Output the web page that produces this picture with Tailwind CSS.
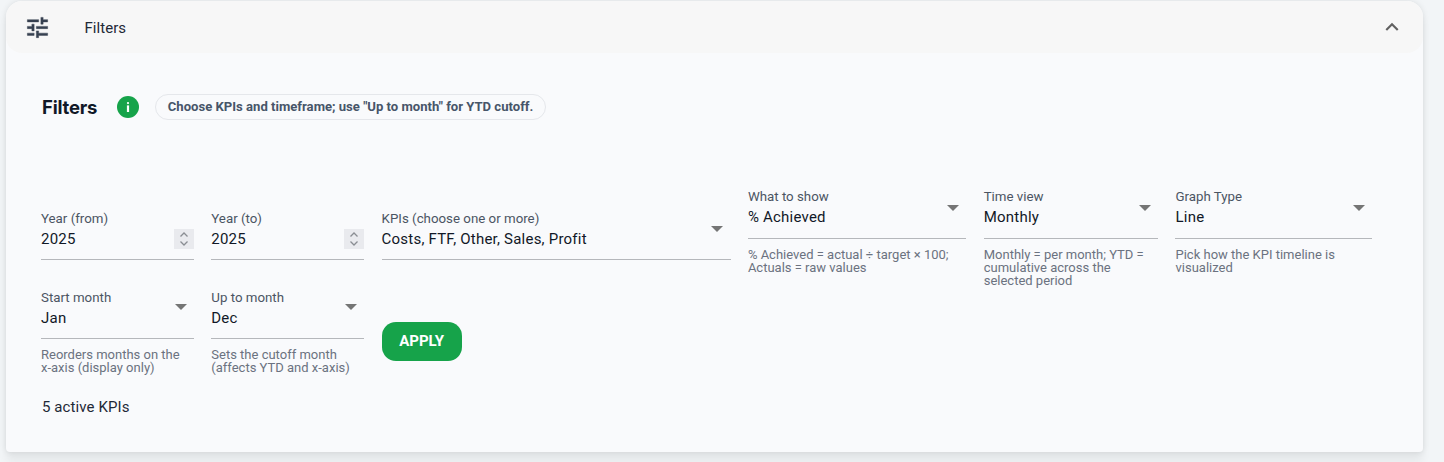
<!DOCTYPE html>
<html lang="en">
    <head>
        <meta charset="UTF-8" />
        <title>Filters</title>
        <script src="https://cdn.jsdelivr.net/npm/@tailwindcss/browser@4"></script>
    </head>
    <body class="h-[462px] overflow-hidden bg-[#f2f5f7] font-['Roboto',sans-serif]">
        <div class="ml-[6px] mt-px w-[1417px] h-[451px] rounded-t-[16px] rounded-b-[4px] bg-[#f9fafc] shadow-[0_0_6px_rgba(0,0,0,0.1),0_10px_8px_rgba(0,0,0,0.05)]">
            <!-- Header -->
            <div class="flex items-center h-[52px] pl-[17.5px] pr-[18px] rounded-[16px] bg-[#f7f7f7]">
                <svg class="w-[27px] h-[27px] text-[#374151]" viewBox="0 0 24 24" fill="currentColor" stroke="currentColor" stroke-width="0.4"><path d="M3 17v2h6v-2H3zM3 5v2h10V5H3zm10 16v-2h8v-2h-8v-2h-2v6h2zM7 9v2H3v2h4v2h2V9H7zm14 4v-2H11v2h10zm-6-4h2V7h4V5h-4V3h-2v6z"/></svg>
                <span class="ml-[34px] pt-[2px] text-[15px] tracking-[0.05px] text-[#1f2937]">Filters</span>
                <svg class="ml-auto w-[26px] h-[26px] text-[#616161]" viewBox="0 0 24 24" fill="currentColor"><path d="M7.41 15.41 12 10.83l4.59 4.58L18 14l-6-6-6 6z"/></svg>
            </div>

            <div class="pl-[35px]">
                <!-- Title -->
                <div class="flex items-center h-[26px] mt-[41px]">
                    <h2 class="ml-px pt-[2px] font-['Inter',sans-serif] text-[18.5px] font-bold text-[#111827] tracking-[-0.2px]">Filters</h2>
                    <span class="ml-[20px] flex items-center justify-center w-[22px] h-[22px] rounded-full bg-[#16a34a]">
                        <svg class="w-[14px] h-[14px] text-white" viewBox="0 0 14 14" fill="currentColor"><rect x="5.9" y="2" width="2.2" height="2.2" rx="1.1"/><rect x="5.9" y="5.4" width="2.2" height="6.6"/></svg>
                    </span>
                    <span class="ml-[16px] flex items-center h-[26px] px-[11.5px] rounded-full border border-[#e5e7eb] text-[13.1px] font-bold text-[#475569]">Choose KPIs and timeframe; use "Up to month" for YTD cutoff.</span>
                </div>

                <!-- First row -->
                <div class="flex items-start gap-[17.3px] mt-[68px]">
                    <div class="mt-[22px] w-[153px] h-[50px] border-b border-[#b5b7bb] relative">
                        <div class="text-[13.3px] leading-[18px] text-[#4b5563]">Year (from)</div>
                        <div class="text-[15px] leading-[23px] tracking-[0.22px] text-[#111827]">2025</div>
                        <span class="absolute right-0 top-[19px] flex items-center justify-center w-[20px] h-[20px] bg-[#e9eaee]">
                            <svg class="w-[12px] h-[16px] text-[#8a8d93]" viewBox="0 0 12 16" fill="none" stroke="currentColor" stroke-width="1.3"><path d="M2.5 5.5 6 2l3.5 3.5M2.5 10.5 6 14l3.5-3.5"/></svg>
                        </span>
                    </div>
                    <div class="mt-[22px] w-[153px] h-[50px] border-b border-[#b5b7bb] relative">
                        <div class="text-[13.3px] leading-[18px] text-[#4b5563]">Year (to)</div>
                        <div class="text-[15px] leading-[23px] tracking-[0.22px] text-[#111827]">2025</div>
                        <span class="absolute right-0 top-[19px] flex items-center justify-center w-[20px] h-[20px] bg-[#e9eaee]">
                            <svg class="w-[12px] h-[16px] text-[#8a8d93]" viewBox="0 0 12 16" fill="none" stroke="currentColor" stroke-width="1.3"><path d="M2.5 5.5 6 2l3.5 3.5M2.5 10.5 6 14l3.5-3.5"/></svg>
                        </span>
                    </div>
                    <div class="mt-[22px] w-[349px] h-[50px] border-b border-[#b5b7bb] relative">
                        <div class="text-[13.3px] leading-[18px] text-[#4b5563]">KPIs (choose one or more)</div>
                        <div class="text-[15px] leading-[23px] tracking-[0.22px] text-[#111827]">Costs, FTF, Other, Sales, Profit</div>
                        <span class="absolute right-[8px] top-[16px] w-0 h-0 border-x-[6px] border-x-transparent border-t-[6px] border-t-[#757575]"></span>
                    </div>
                    <div class="w-[218.5px]">
                        <div class="h-[51px] border-b border-[#b5b7bb] relative">
                            <div class="text-[13.3px] leading-[18px] text-[#4b5563]">What to show</div>
                            <div class="text-[15px] leading-[23px] tracking-[0.22px] text-[#111827]">% Achieved</div>
                            <span class="absolute right-[7px] top-[17px] w-0 h-0 border-x-[6px] border-x-transparent border-t-[6px] border-t-[#757575]"></span>
                        </div>
                        <p class="mt-[9px] h-[40px] text-[13px] leading-[13px] text-[#6b7280]">% Achieved = actual ÷ target × 100; Actuals = raw values</p>
                    </div>
                    <div class="w-[174.5px]">
                        <div class="h-[51px] border-b border-[#b5b7bb] relative">
                            <div class="text-[13.3px] leading-[18px] text-[#4b5563]">Time view</div>
                            <div class="text-[15px] leading-[23px] tracking-[0.22px] text-[#111827]">Monthly</div>
                            <span class="absolute right-[7px] top-[17px] w-0 h-0 border-x-[6px] border-x-transparent border-t-[6px] border-t-[#757575]"></span>
                        </div>
                        <p class="mt-[9px] h-[40px] text-[13px] leading-[13px] text-[#6b7280]">Monthly = per month; YTD = cumulative across the selected period</p>
                    </div>
                    <div class="w-[196.5px]">
                        <div class="h-[51px] border-b border-[#b5b7bb] relative">
                            <div class="text-[13.3px] leading-[18px] text-[#4b5563]">Graph Type</div>
                            <div class="text-[15px] leading-[23px] tracking-[0.22px] text-[#111827]">Line</div>
                            <span class="absolute right-[7px] top-[17px] w-0 h-0 border-x-[6px] border-x-transparent border-t-[6px] border-t-[#757575]"></span>
                        </div>
                        <p class="mt-[9px] h-[40px] text-[13px] leading-[13px] text-[#6b7280]">Pick how the KPI timeline is visualized</p>
                    </div>
                </div>

                <!-- Second row -->
                <div class="flex items-start gap-[17.3px] mt-[1px]">
                    <div class="w-[153px]">
                        <div class="h-[50px] border-b border-[#b5b7bb] relative">
                            <div class="text-[13.3px] leading-[18px] text-[#4b5563]">Start month</div>
                            <div class="text-[15px] leading-[23px] tracking-[0.22px] text-[#111827]">Jan</div>
                            <span class="absolute right-[7px] top-[15px] w-0 h-0 border-x-[6px] border-x-transparent border-t-[6px] border-t-[#757575]"></span>
                        </div>
                        <p class="mt-[9px] text-[13px] leading-[13px] text-[#6b7280]">Reorders months on the<br />x-axis (display only)</p>
                    </div>
                    <div class="w-[153px]">
                        <div class="h-[50px] border-b border-[#b5b7bb] relative">
                            <div class="text-[13.3px] leading-[18px] text-[#4b5563]">Up to month</div>
                            <div class="text-[15px] leading-[23px] tracking-[0.22px] text-[#111827]">Dec</div>
                            <span class="absolute right-[7px] top-[15px] w-0 h-0 border-x-[6px] border-x-transparent border-t-[6px] border-t-[#757575]"></span>
                        </div>
                        <p class="mt-[9px] text-[13px] leading-[13px] text-[#6b7280]">Sets the cutoff month (affects YTD and x-axis)</p>
                    </div>
                    <button class="mt-[33px] w-[80px] h-[39px] rounded-[14px] bg-[#16a34a] text-[15px] font-bold text-white">APPLY</button>
                </div>

                <p class="ml-px mt-[23px] text-[15px] leading-[20px] tracking-[0.1px] text-[#1f2937]">5 active KPIs</p>
            </div>
        </div>
    </body>
</html>
